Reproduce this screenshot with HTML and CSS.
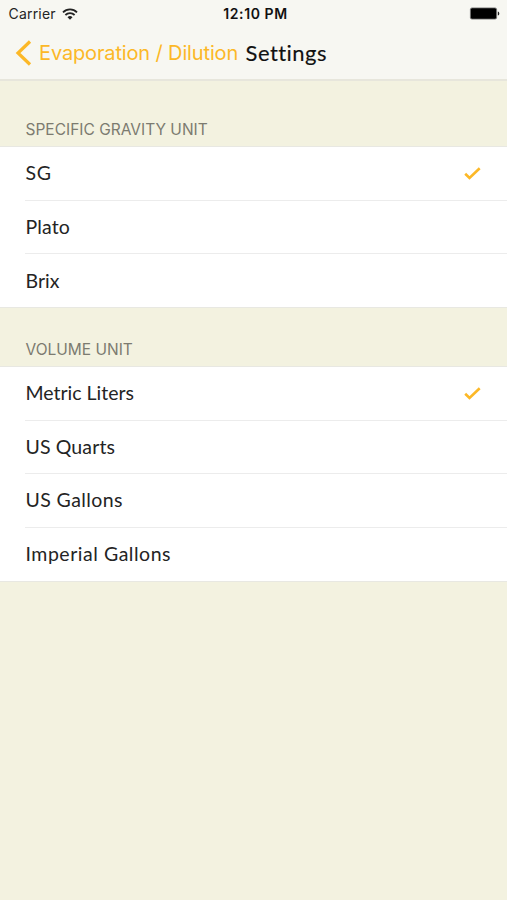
FILE: index.html
```html
<!DOCTYPE html>
<html lang="en">
<head>
<meta charset="utf-8">
<title>Settings</title>
<link rel="stylesheet" href="styles.css">
</head>
<body>
<header class="top">
  <div class="status">
    <div class="carrier"><span class="carrier-name">Carrier</span>
      <svg class="wifi" width="16" height="12" viewBox="0 0 16 12" fill="none" stroke="#222" stroke-width="1.8"><path d="M1 4.3a10 10 0 0 1 14 0M3.4 7a6.6 6.6 0 0 1 9.2 0"/><path d="M8 11.8 5.5 9.2a3.6 3.6 0 0 1 5 0z" fill="#222" stroke="none"/></svg>
    </div>
    <span class="time">12:10 PM</span>
    <svg class="battery" width="31" height="13" viewBox="0 0 31 13"><rect x="1.4" y=".9" width="26.2" height="11.2" rx="1.6" fill="#000" stroke="#777" stroke-width=".8"/><path d="M28.8 4.4c2 .6 2 3.6 0 4.2z" fill="#222"/></svg>
  </div>
  <nav class="nav">
    <a class="back"><svg class="chevron" width="17" height="26" viewBox="0 0 17 26" fill="none" stroke="#fcb827" stroke-width="3.2"><path d="M15 1.5 3 13l12 11.5"/></svg><span class="back-text">Evaporation / Dilution</span></a>
    <h1 class="title">Settings</h1>
  </nav>
</header>
<main>
  <section>
    <h2 class="label first">SPECIFIC GRAVITY UNIT</h2>
    <ul class="list">
      <li><span class="sg">SG</span><svg class="check" width="17" height="13" viewBox="0 0 17 13" fill="none" stroke="#fcb827" stroke-width="2.6"><path d="m1.2 6.7 4.3 4.2L15.7 1.2"/></svg></li>
      <li><span class="plato">Plato</span></li>
      <li><span class="brix">Brix</span></li>
    </ul>
  </section>
  <section>
    <h2 class="label">VOLUME UNIT</h2>
    <ul class="list">
      <li><span class="liters">Metric Liters</span><svg class="check" width="17" height="13" viewBox="0 0 17 13" fill="none" stroke="#fcb827" stroke-width="2.6"><path d="m1.2 6.7 4.3 4.2L15.7 1.2"/></svg></li>
      <li><span class="quarts">US Quarts</span></li>
      <li><span class="gallons">US Gallons</span></li>
      <li><span class="imperial">Imperial Gallons</span></li>
    </ul>
  </section>
</main>
</body>
</html>
```
FILE: styles.css
```css
* { box-sizing: border-box; }
body { margin: 0; min-height: 900px; background: #f3f2e0; font-family: Lato, "Liberation Sans", sans-serif; color: #242424; font-variant-ligatures: none; }
.top { height: 81px; background: #f7f7f2; border-bottom: 2px solid #e7e6dc; }
.status { height: 27px; display: grid; grid-template-columns: 1fr auto 1fr; align-items: center; padding: 0 7px 0 8px; font-family: Inter, sans-serif; font-size: 14px; line-height: 27px; }
.carrier { display: flex; align-items: center; gap: 6px; padding-left: .5px; }
.carrier-name { letter-spacing: .2px; }
.time { padding-left: 3px; font-weight: 600; color: #111; letter-spacing: .6px; }
.battery { justify-self: end; }
.nav { height: 52px; display: flex; align-items: center; padding-left: 15px; }
.back { display: flex; align-items: center; gap: 7px; color: #fcb827; }
.back-text { font-family: Inter, sans-serif; font-size: 20px; line-height: 28px; letter-spacing: -.14px; }
.title { margin: -1px 0 0 7.5px; font-size: 22px; line-height: 28px; font-weight: 400; color: #111; -webkit-text-stroke: .15px #111; letter-spacing: .45px; }
.label { margin: 0; height: 58px; padding: 32px 0 0 25.5px; font: 400 15.5px/20px Inter, sans-serif; color: #7c7b70; }
.label.first { height: 65px; padding-top: 39px; }
.list { margin: 0; padding: 0; list-style: none; background: #fff; border-top: 1px solid #e8e8e2; border-bottom: 1px solid #e8e8e2; }
.list li { height: 53.6px; margin-left: 25px; padding: 0 26px 0 .5px; display: flex; align-items: center; justify-content: space-between; border-bottom: 1px solid #ececec; font-size: 19.5px; line-height: 26px; }
.list li:last-child { height: 52.8px; border-bottom: 0; }
.check { margin-top: 1px; }
.sg { letter-spacing: .6px; }
.plato { letter-spacing: .15px; }
.quarts { letter-spacing: .12px; }
.gallons { letter-spacing: .4px; }
.imperial { letter-spacing: .53px; }
```
